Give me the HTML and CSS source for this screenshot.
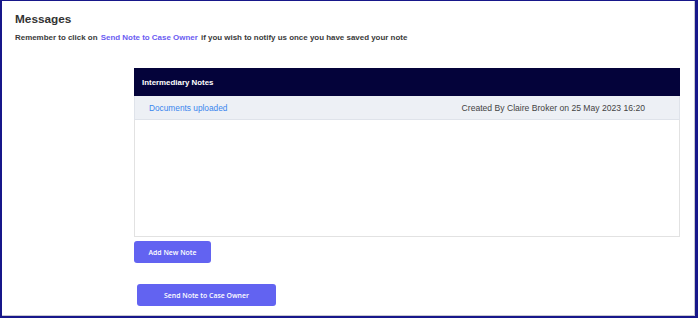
FILE: index.html
```html
<!DOCTYPE html>
<html lang="en">
<head>
    <meta charset="UTF-8">
    <meta name="viewport" content="width=device-width, initial-scale=1.0">
    <title>Messages</title>
    <link rel="stylesheet" href="styles.css">
</head>
<body>

    <div class="frame">
        <h2 class="title">Messages</h2>
        <p class="hint">Remember to click on <a class="hint-link">Send Note to Case Owner</a> if you wish to notify us once you have saved your note</p>

        <!-- Panel de notas -->
        <section class="notes">
            <div class="notes-head">Intermediary Notes</div>
            <div class="notes-row">
                <a class="note-link">Documents uploaded</a>
                <span class="note-meta">Created By Claire Broker on 25 May 2023 16:20</span>
            </div>
            <div class="notes-body"></div>
        </section>

        <button class="btn btn-add">Add New Note</button>
        <button class="btn btn-send">Send Note to Case Owner</button>
    </div>

</body>
</html>
```

FILE: styles.css
```css
/* Estilo general */
body {
    margin: 0;
    padding: 0;
    font-family: "Liberation Sans", Arial, sans-serif;
    background-color: #fff;
}
.frame {
    width: 698px;
    height: 318px;
    box-sizing: border-box;
    border-top: 1px solid #17178a;
    border-left: 2px solid #17178a;
    border-right: 3px solid #17178a;
    border-bottom: 2px solid #17178a;
    box-shadow: inset -1px -1px 0 #c8c8d0;
    padding: 11px 0 0 13px;
    display: flex;
    flex-direction: column;
    align-items: flex-start;
}
.title {
    margin: 0;
    font-size: 11.8px;
    font-weight: bold;
    color: #333;
    line-height: 14px;
}
.hint {
    margin: 7px 0 0 0;
    font-size: 7.95px;
    font-weight: bold;
    color: #3a3a3a;
    line-height: 10px;
}
.hint-link {
    color: #6a5cf2;
    margin: 0 1px;
}
.notes {
    margin: 25px 0 0 119px;
    width: 546px;
}
.notes-head {
    height: 28px;
    background-color: #04033a;
    color: white;
    font-size: 7.9px;
    font-weight: bold;
    display: flex;
    align-items: center;
    padding-left: 8px;
}
.notes-row {
    height: 23px;
    background-color: #edf0f5;
    border: 1px solid #dfe3ea;
    border-top: none;
    display: flex;
    align-items: center;
    justify-content: space-between;
    padding: 0 34px 0 14px;
    font-size: 8.3px;
}
.note-link {
    color: #3a86ee;
    cursor: pointer;
}
.note-meta {
    color: #444;
    font-size: 8.6px;
}
.notes-body {
    height: 116px;
    border: 1px solid #e2e2e2;
    border-top: none;
}
.btn {
    background-color: #6263f1;
    color: white;
    border: none;
    border-radius: 3px;
    height: 22px;
    font-family: "Open Sans", sans-serif;
    font-size: 6.9px;
    font-weight: 600;
    cursor: pointer;
    padding: 0;
}
.btn-add {
    margin: 4px 0 0 119px;
    width: 77px;
}
.btn-send {
    margin: 21px 0 0 122px;
    width: 139px;
}
```
